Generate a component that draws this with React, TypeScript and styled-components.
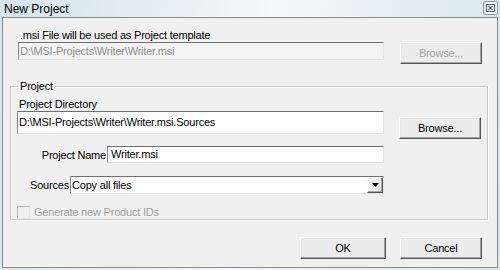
import React from "react";
import styled, { createGlobalStyle } from "styled-components";

const Global = createGlobalStyle`
  html, body { margin: 0; padding: 0; }
  body {
    width: 500px; height: 270px; overflow: hidden;
    background: #e3edf2;
    font-family: "Liberation Sans", Arial, sans-serif;
    font-size: 11px;
    letter-spacing: -0.2px;
    color: #000;
  }
  * { box-sizing: border-box; }
`;

const Window = styled.div`
  width: 500px;
  height: 270px;
  display: flex;
  flex-direction: column;
  background: linear-gradient(100deg, #d7e4eb 0%, #e6eff4 30%, #f3f8fa 50%, #e4eef3 75%, #dbe7ee 100%);
`;

const TitleBar = styled.div`
  height: 17px;
  display: flex;
  align-items: center;
  justify-content: space-between;
  padding: 0 2px 0 4px;
`;

const Title = styled.span`
  font-size: 12px;
  line-height: 14px;
  letter-spacing: 0;
  color: #000;
`;

const CloseBox = styled.div`
  width: 15px;
  height: 14px;
  margin-top: -1px;
  border: 1px solid #8e9aa1;
  border-radius: 2px;
  background: #eef3f6;
  display: flex;
  align-items: center;
  justify-content: center;
`;

const Client = styled.div`
  flex: 1;
  margin: 0 2px 2px 2px;
  border: 1px solid #8a8a8a;
  background: #f0f0f0;
  padding-top: 11px;
  display: flex;
  flex-direction: column;
`;

const Label = styled.div<{ $indent?: number; $disabled?: boolean }>`
  line-height: 13px;
  height: 13px;
  margin-left: ${(p) => p.$indent ?? 0}px;
  color: ${(p) => (p.$disabled ? "#a0a0a0" : "#000")};
  white-space: nowrap;
`;

const Row = styled.div<{ $top?: number; $indent?: number }>`
  display: flex;
  align-items: flex-start;
  margin-top: ${(p) => p.$top ?? 0}px;
  margin-left: ${(p) => p.$indent ?? 0}px;
`;

const TextBox = styled.div<{ $width?: number; $h?: number; $disabled?: boolean; $pad?: number }>`
  ${(p) => (p.$width ? `width: ${p.$width}px;` : "flex: 1;")}
  height: ${(p) => p.$h ?? 17}px;
  background: ${(p) => (p.$disabled ? "#f3f3f3" : "#fff")};
  border-top: 1px solid #6f6f6f;
  border-left: 1px solid #8a8a8a;
  border-right: 1px solid #e6e6e6;
  border-bottom: 1px solid #e2e2e2;
  color: ${(p) => (p.$disabled ? "#8e8e8e" : "#000")};
  padding-left: ${(p) => p.$pad ?? 1}px;
  display: flex;
  align-items: center;
  white-space: nowrap;
  overflow: hidden;
  line-height: 13px;
`;

const Button = styled.div<{ $width: number; $top?: number; $left?: number; $disabled?: boolean }>`
  width: ${(p) => p.$width}px;
  height: 22px;
  margin-top: ${(p) => p.$top ?? 0}px;
  margin-left: ${(p) => p.$left ?? 0}px;
  background: #ececec;
  border-top: 1px solid #fdfdfd;
  border-left: 1px solid #fdfdfd;
  border-right: 1px solid #555;
  border-bottom: 1px solid #555;
  box-shadow: inset -1px -1px 0 #a8a8a8, inset 1px 1px 0 #e8e8e8;
  display: flex;
  align-items: center;
  justify-content: center;
  color: ${(p) => (p.$disabled ? "#a3a3a3" : "#000")};
  line-height: 13px;
`;

const Group = styled.div`
  position: relative;
  margin: 22px 0 0 7px;
  width: 478px;
  height: 134px;
  border: 1px solid #c8c8c8;
  box-shadow: inset 1px 1px 0 #fff, 1px 1px 0 #fff;
  display: flex;
  padding: 10px 0 0 6px;
`;

const Legend = styled.span`
  position: absolute;
  left: 7px;
  top: -7px;
  padding: 0 2px;
  background: #f0f0f0;
  line-height: 13px;
`;

const Column = styled.div<{ $width?: number }>`
  display: flex;
  flex-direction: column;
  ${(p) => (p.$width ? `width: ${p.$width}px;` : "")}
`;

const DirLabel = styled.div`
  margin-left: 2px;
  height: 14px;
  line-height: 14px;
  white-space: nowrap;
`;

const FieldLabel = styled.div<{ $width: number }>`
  width: ${(p) => p.$width}px;
  height: 17px;
  display: flex;
  align-items: center;
  justify-content: flex-end;
  padding-right: 1px;
  white-space: nowrap;
`;

const Select = styled.div`
  flex: 1;
  height: 18px;
  background: #fff;
  border-top: 1px solid #6f6f6f;
  border-left: 1px solid #8a8a8a;
  border-right: 1px solid #e6e6e6;
  border-bottom: 1px solid #e2e2e2;
  display: flex;
  align-items: center;
  padding: 0 0 0 1px;
`;

const SelectText = styled.span`
  flex: 1;
  line-height: 13px;
`;

const DropButton = styled.div`
  width: 16px;
  height: 16px;
  background: #ececec;
  border-top: 1px solid #fdfdfd;
  border-left: 1px solid #fdfdfd;
  border-right: 1px solid #555;
  border-bottom: 1px solid #555;
  box-shadow: inset -1px -1px 0 #a8a8a8;
  display: flex;
  align-items: center;
  justify-content: center;
`;

const CheckRow = styled.div`
  display: flex;
  align-items: center;
  margin-top: 12px;
  height: 13px;
`;

const CheckBox = styled.div`
  width: 13px;
  height: 13px;
  border-top: 1px solid #b5b5b5;
  border-left: 1px solid #b5b5b5;
  border-right: 1px solid #e8e8e8;
  border-bottom: 1px solid #e8e8e8;
  background: #f0f0f0;
  margin-right: 4px;
`;

const Footer = styled.div`
  display: flex;
  justify-content: flex-end;
  margin-top: 17px;
  padding-right: 15px;
  gap: 14px;
`;

export default function App() {
  return (
    <>
      <Global />
      <Window>
        <TitleBar>
          <Title>New Project</Title>
          <CloseBox>
            <svg width="9" height="8" viewBox="0 0 9 8">
              <rect x="0.5" y="0.5" width="8" height="7" fill="none" stroke="#5b666c" strokeWidth="1" />
              <path d="M2.5 2 L6.5 6 M6.5 2 L2.5 6" stroke="#5b666c" strokeWidth="1.2" />
            </svg>
          </CloseBox>
        </TitleBar>
        <Client>
          <Label $indent={17}>.msi File will be used as Project template</Label>
          <Row $indent={15}>
            <TextBox $width={366} $h={18} $disabled>D:\MSI-Projects\Writer\Writer.msi</TextBox>
            <Button $width={82} $left={16} $disabled>Browse...</Button>
          </Row>
          <Group>
            <Legend>Project</Legend>
            <Column $width={367}>
              <DirLabel>Project Directory</DirLabel>
              <TextBox $pad={1}>D:\MSI-Projects\Writer\Writer.msi.Sources</TextBox>
              <Row $top={12}>
                <FieldLabel $width={90}>Project Name</FieldLabel>
                <TextBox $pad={3}>Writer.msi</TextBox>
              </Row>
              <Row $top={13}>
                <FieldLabel $width={53}>Sources</FieldLabel>
                <Select>
                  <SelectText>Copy all files</SelectText>
                  <DropButton>
                    <svg width="7" height="4" viewBox="0 0 7 4">
                      <path d="M0 0 H7 L3.5 4 Z" fill="#000" />
                    </svg>
                  </DropButton>
                </Select>
              </Row>
              <CheckRow>
                <CheckBox />
                <Label $disabled>Generate new Product IDs</Label>
              </CheckRow>
            </Column>
            <Column>
              <Button $width={82} $top={20} $left={15}>Browse...</Button>
            </Column>
          </Group>
          <Footer>
            <Button $width={86}>OK</Button>
            <Button $width={82}>Cancel</Button>
          </Footer>
        </Client>
      </Window>
    </>
  );
}
